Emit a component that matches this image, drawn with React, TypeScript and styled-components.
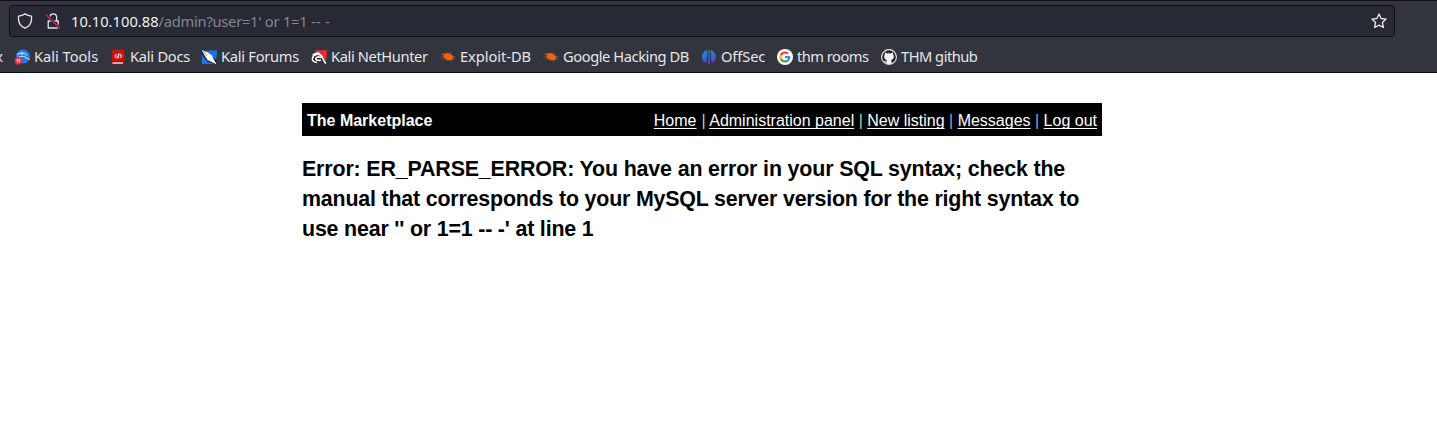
import React from 'react';
import styled, { createGlobalStyle } from 'styled-components';

const GlobalStyle = createGlobalStyle`
  * { box-sizing: border-box; }
  body { margin: 0; background: #fff; overflow: hidden; }
`;

const Chrome = styled.header`
  height: 73px;
  background: #33353e;
  border-top: 1px solid #101116;
  border-bottom: 1px solid #0c0c0f;
  font-family: 'Noto Sans', sans-serif;
  font-size: 14.67px;
  color: #e6e6e6;
  overflow: hidden;
`;

const AddressBar = styled.div`
  display: flex;
  align-items: center;
  width: 1386px;
  height: 32px;
  margin: 4px 0 0 9px;
  padding: 0 7px;
  background: #272935;
  border: 1px solid #0d0e12;
  border-radius: 4px;
`;

const BarIcon = styled.svg<{ $gap?: number }>`
  flex: none;
  display: block;
  width: 16px;
  height: 16px;
  margin-right: ${(p) => p.$gap ?? 0}px;
  fill: none;
  stroke: #e6e6e6;
  stroke-width: 1.3;
  stroke-linejoin: round;
  stroke-linecap: round;
`;

const Url = styled.div`
  flex: 1;
  line-height: 20px;
  color: #85868d;
  letter-spacing: -0.24px;
  white-space: pre;
`;

const Host = styled.span`
  color: #f0f0f0;
  letter-spacing: 0.03px;
`;

const Dashes = styled.span`
  letter-spacing: 0.3px;
`;

const Bookmarks = styled.nav`
  display: flex;
  align-items: center;
  height: 30px;
  margin-top: 5px;
`;

const Clipped = styled.span`
  flex: none;
  display: flex;
  justify-content: flex-end;
  width: 3px;
  margin-right: 11px;
  padding-bottom: 2px;
  overflow: hidden;
  line-height: 20px;
`;

const Bookmark = styled.a<{ $width: number }>`
  flex: none;
  display: flex;
  align-items: center;
  gap: 4px;
  width: ${(p) => p.$width}px;
  line-height: 20px;
  white-space: nowrap;
`;

const BookmarkLabel = styled.span<{ $tracking: number }>`
  padding-bottom: 2px;
  letter-spacing: ${(p) => p.$tracking}px;
`;

const Favicon = styled.svg`
  flex: none;
  display: block;
  width: 16px;
  height: 16px;
`;

const Page = styled.main`
  width: 800px;
  margin: 30px 0 0 302px;
  font-family: 'Liberation Sans', Arial, sans-serif;
  font-size: 16px;
  color: #000;
`;

const SiteBar = styled.div`
  display: flex;
  justify-content: space-between;
  height: 33px;
  padding: 5px;
  line-height: 26px;
  background: #000;
  color: #fff;
`;

const Links = styled.div`
  white-space: nowrap;
`;

const SiteLink = styled.a`
  color: #fff;
  text-decoration: underline;
  text-decoration-thickness: 1px;
  text-underline-offset: 2px;
  text-decoration-skip-ink: none;
`;

const Divider = styled.span<{ $color: string; $space: number }>`
  margin-left: ${(p) => p.$space}px;
  color: ${(p) => p.$color};
`;

const ErrorText = styled.h1`
  margin: 18px 0 0;
  font-size: 21.4px;
  line-height: 30px;
  font-weight: 700;
`;

const ErrorLine = styled.span<{ $tracking: number }>`
  display: block;
  white-space: nowrap;
  letter-spacing: ${(p) => p.$tracking}px;
`;

const KaliTools = () => (
  <Favicon viewBox="0 0 16 16">
    <circle cx="9" cy="7.6" r="7" fill="#2777e8" />
    <path d="M3 5.5C7 2.8 11 3.6 13 6.5M4 8.5c4-2 7-1 8.5.5 1.5 0 2.500.5 3 2M7 5.500c1-.7 2-1 3-1" fill="none" stroke="#b9d7ff" strokeWidth="1.1" />
    <circle cx="4.400" cy="12" r="3.700" fill="#ee2c32" />
    <path d="M2.400 10.800h4M3.500 10.800v2.800M5.400 10.800v2.800" stroke="#fff" strokeWidth=".8" />
  </Favicon>
);

const KaliDocs = () => (
  <Favicon viewBox="0 0 16 16">
    <path d="M3 .8h11.500v11.700L13 15.300H2V2z" fill="#cf1013" />
    <path d="M2.200 12.800h11.800" stroke="#8e0b0e" />
    <path d="M2.500 14h10.500" stroke="#f5dede" strokeWidth="1.400" />
    <path d="M6.700 5L5 7l1.700 2M10 5l1.700 2L10 9M9 4.500L7.700 9.500" fill="none" stroke="#fff" strokeWidth="1.100" />
  </Favicon>
);

const KaliForums = () => (
  <Favicon viewBox="0 0 16 16">
    <path d="M1 1.500h15.200L14.800 15H.8z" fill="#1d72e6" />
    <path d="M0 .6l4.500.8L15 11l1 4.700L6.500 12.500 2 7z" fill="#15171c" />
    <path d="M.5.8l6.500 2.800 4 3 1.800 4 3 4.900-4.600-2.300-4.500-2L3.500 6.500z" fill="#fff" />
    <path d="M1.500 1.800L6 7" stroke="#4a4c52" strokeWidth=".6" />
  </Favicon>
);

const NetHunter = () => (
  <Favicon viewBox="0 0 16 16">
    <path d="M3.500 1.200H16l-1 11.300z" fill="#ee2b31" />
    <path d="M1 6C3 3 9 3 11.500 7l3 6-1.500 1-3-3-3 2.500-4-.5L.8 9z" fill="#15171c" />
    <path d="M5.500 13.200C2.500 13.200 1 11.300 1.500 9.300 2.300 5.500 8.500 3.800 10.800 7.500 12 9.500 12.500 12.500 14.500 14M9.500 8.500C7 7 4 8.700 5 10.500c.6 1 2 1 4.500.8M2 5.800C4 4.300 6 3.700 8 4.200" fill="none" stroke="#fff" strokeWidth="1.600" strokeLinecap="round" />
  </Favicon>
);

const ExploitDb = () => (
  <Favicon viewBox="0 0 16 16">
    <path d="M2.600 3.700L5 4.800c2-1.300 4.500-.7 6.300.8l2.200 1.900-.2 1.700-1.500 1.800c-2 .8-4.700.2-6.400-1.100C3.800 9 3 7.600 3.700 6z" fill="#ee6310" />
    <path d="M4 6L1 5.300M4 7.700L.5 8.300M5 9.500l-2.500 1.300M7 5l.3-1.500M10 5.500l1.300-1.400M12.500 8l3-.2M12.500 9.500l2.200 1M10.500 11l1 1.700M7.700 10.500L7.500 12.200" stroke="#a2522b" strokeWidth=".8" />
  </Favicon>
);

const OffSec = () => (
  <Favicon viewBox="0 0 16 16">
    <defs>
      <linearGradient id="offsec" gradientUnits="userSpaceOnUse" x1="4" y1="0" x2="8" y2="16">
        <stop offset="0" stopColor="#20a0cc" />
        <stop offset=".5" stopColor="#3269d0" />
        <stop offset="1" stopColor="#6538d4" />
      </linearGradient>
    </defs>
    <path d="M6.200 1c.3 4-.2 9-1.300 13.200C-.7 11-.3 3.500 6.200 1zM9.800 1c-.3 4 .2 9 1.300 13.200C16.700 11 16.300 3.500 9.800 1zM7.500.7h1l.5 14.700H7z" fill="url(#offsec)" />
  </Favicon>
);

const Google = () => (
  <Favicon viewBox="0 0 16 16">
    <circle cx="8" cy="8" r="8" fill="#fff" />
    <g transform="translate(2.400 2.400) scale(.233)">
      <path fill="#EA4335" d="M24 9.500c3.540 0 6.710 1.220 9.210 3.600l6.850-6.850C35.900 2.380 30.470 0 24 0 14.620 0 6.510 5.380 2.560 13.220l7.980 6.190C12.430 13.720 17.740 9.500 24 9.500z" />
      <path fill="#4285F4" d="M46.980 24.550c0-1.570-.15-3.090-.38-4.550H24v9.020h12.940c-.58 2.960-2.260 5.480-4.780 7.180l7.730 6c4.510-4.180 7.090-10.360 7.090-17.650z" />
      <path fill="#FBBC05" d="M10.530 28.590c-.48-1.450-.76-2.990-.76-4.590s.27-3.140.76-4.590l-7.980-6.190C.92 16.460 0 20.120 0 24c0 3.880.92 7.540 2.560 10.780l7.970-6.190z" />
      <path fill="#34A853" d="M24 48c6.480 0 11.930-2.130 15.890-5.810l-7.730-6c-2.150 1.450-4.920 2.300-8.160 2.300-6.260 0-11.570-4.220-13.470-9.910l-7.980 6.190C6.510 42.620 14.620 48 24 48z" />
    </g>
  </Favicon>
);

const Github = () => (
  <Favicon viewBox="0 0 16 16">
    <circle cx="8" cy="8" r="7.400" fill="#24262c" stroke="#eee" strokeWidth="1.100" />
    <path d="M4 3.300l2.200 1.200a8 8 0 0 1 3.600 0L12 3.300l.2 2.200c1.300 2.200.5 5-2.200 5.500.5.500.6 1.100.6 1.700v1.900a7 7 0 0 1-5.200 0v-1.300c-1.500.3-2-.4-2.400-1.200l-.6-.6c1.100-.1 1.400 1 2.200 1 .4.100.7 0 .9-.1 0-.6.200-1 .5-1.400-2.700-.5-3.500-3.300-2.200-5.500z" fill="#f2f2f2" />
  </Favicon>
);

const bookmarks = [
  { label: 'Kali Tools', width: 96, tracking: -0.02, Icon: KaliTools },
  { label: 'Kali Docs', width: 91, tracking: -0.25, Icon: KaliDocs },
  { label: 'Kali Forums', width: 110, tracking: -0.27, Icon: KaliForums },
  { label: 'Kali NetHunter', width: 129, tracking: -0.38, Icon: NetHunter },
  { label: 'Exploit-DB', width: 103, tracking: -0.05, Icon: ExploitDb },
  { label: 'Google Hacking DB', width: 158, tracking: -0.42, Icon: ExploitDb },
  { label: 'OffSec', width: 76, tracking: -0.1, Icon: OffSec },
  { label: 'thm rooms', width: 104, tracking: -0.5, Icon: Google },
  { label: 'THM github', width: 110, tracking: -0.5, Icon: Github },
];

const siteLinks = [
  { label: 'Home', divider: '', space: 0 },
  { label: 'Administration panel', divider: '#a9d8c0', space: 0.6 },
  { label: 'New listing', divider: '#a9d8c0', space: 0 },
  { label: 'Messages', divider: '#7fb2e4', space: 0 },
  { label: 'Log out', divider: '#7fb2e4', space: 0 },
];

const errorLines = [
  { text: 'Error: ER_PARSE_ERROR: You have an error in your SQL syntax; check the', tracking: -0.148 },
  { text: 'manual that corresponds to your MySQL server version for the right syntax to', tracking: -0.187 },
  { text: "use near '' or 1=1 -- -' at line 1", tracking: -0.18 },
];

export default function App() {
  return (
    <>
      <GlobalStyle />
      <Chrome>
        <AddressBar>
          <BarIcon $gap={12} viewBox="0 0 16 16">
            <path d="M8 .9c2 1.400 4 2 6.500 2.200.5 5.200-1.200 9.900-6.500 12.100C2.700 13 1 8.300 1.500 3.100 4 2.900 6 2.300 8 .9z" />
          </BarIcon>
          <BarIcon $gap={10} viewBox="0 0 16 16">
            <path d="M4.800 6V4.200a3.400 3.400 0 0 1 6.800 0V8M3.200 8h10v7h-10z" />
            <path d="M1.500 2L14.700 15" stroke="#272935" strokeWidth="3" />
            <path d="M1.200 2L14.500 15" stroke="#e22850" />
          </BarIcon>
          <Url>
            <Host>10.10.100.88</Host>/admin?user=1' or 1=1 <Dashes>-- -</Dashes>
          </Url>
          <BarIcon viewBox="0 0 16 16">
            <path d="M8 .9l2.100 4.600 5 .6-3.700 3.400 1 5L8 12.100l-4.400 2.400 1-5L.9 6.100l5-.6z" />
          </BarIcon>
        </AddressBar>
        <Bookmarks>
          <Clipped>x</Clipped>
          {bookmarks.map(({ label, width, tracking, Icon }) => (
            <Bookmark key={label} $width={width}>
              <Icon />
              <BookmarkLabel $tracking={tracking}>{label}</BookmarkLabel>
            </Bookmark>
          ))}
        </Bookmarks>
      </Chrome>
      <Page>
        <SiteBar>
          <b>The Marketplace</b>
          <Links>
            {siteLinks.map(({ label, divider, space }) => (
              <React.Fragment key={label}>
                {divider && (
                  <Divider $color={divider} $space={space}>
                    {' | '}
                  </Divider>
                )}
                <SiteLink>{label}</SiteLink>
              </React.Fragment>
            ))}
          </Links>
        </SiteBar>
        <ErrorText>
          {errorLines.map(({ text, tracking }) => (
            <ErrorLine key={text} $tracking={tracking}>
              {text}
            </ErrorLine>
          ))}
        </ErrorText>
      </Page>
    </>
  );
}
